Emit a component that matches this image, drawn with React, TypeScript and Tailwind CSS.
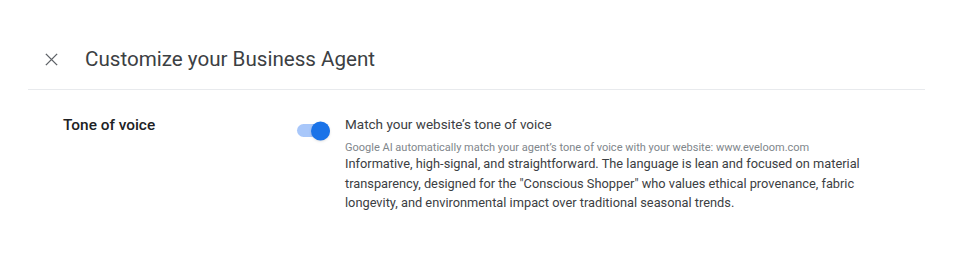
export default function App() {
  return (
    <div className="w-[980px] h-[259px] bg-white font-['Roboto',_sans-serif]">
      {/* Header */}
      <div className="flex items-center w-[897px] h-[90px] pt-[30px] ml-[28px] pl-[15px] border-b border-[#e8eaed]">
        <button className="w-[16px] h-[16px] flex items-center justify-center text-[#5f6368]">
          <svg width="15" height="15" viewBox="0 0 16 16" fill="none" stroke="currentColor" strokeWidth="1.5">
            <path d="M2 2 L14 14 M14 2 L2 14" />
          </svg>
        </button>
        <h1 className="ml-[26px] text-[20.6px] text-[#3c4043] leading-none">
          Customize your Business Agent
        </h1>
      </div>

      {/* Setting row */}
      <div className="flex pt-[25px] pl-[63px]">
        <div className="w-[234px] text-[15.4px] font-medium text-[#202124] leading-[20px]">
          Tone of voice
        </div>
        <div className="relative w-[33px] h-[13px] mt-[9px] rounded-full bg-[#a8c7fa]">
          <div className="absolute right-0 top-1/2 -translate-y-1/2 w-[19px] h-[19px] rounded-full bg-[#1a73e8] shadow-sm" />
        </div>
        <div className="ml-[15px] w-[540px]">
          <div className="text-[13.5px] text-[#3c4043] leading-[18px]">
            Match your website’s tone of voice
          </div>
          <div className="mt-[7px] text-[11px] text-[#80868b] leading-[15px]">
            Google AI automatically match your agent’s tone of voice with your website: www.eveloom.com
          </div>
          <p className="-mt-[1px] text-[12.8px] text-[#3c4043] leading-[19.5px]">
            Informative, high-signal, and straightforward. The language is lean and focused on material
            transparency, designed for the "Conscious Shopper" who values ethical provenance, fabric
            longevity, and environmental impact over traditional seasonal trends.
          </p>
        </div>
      </div>
    </div>
  );
}
